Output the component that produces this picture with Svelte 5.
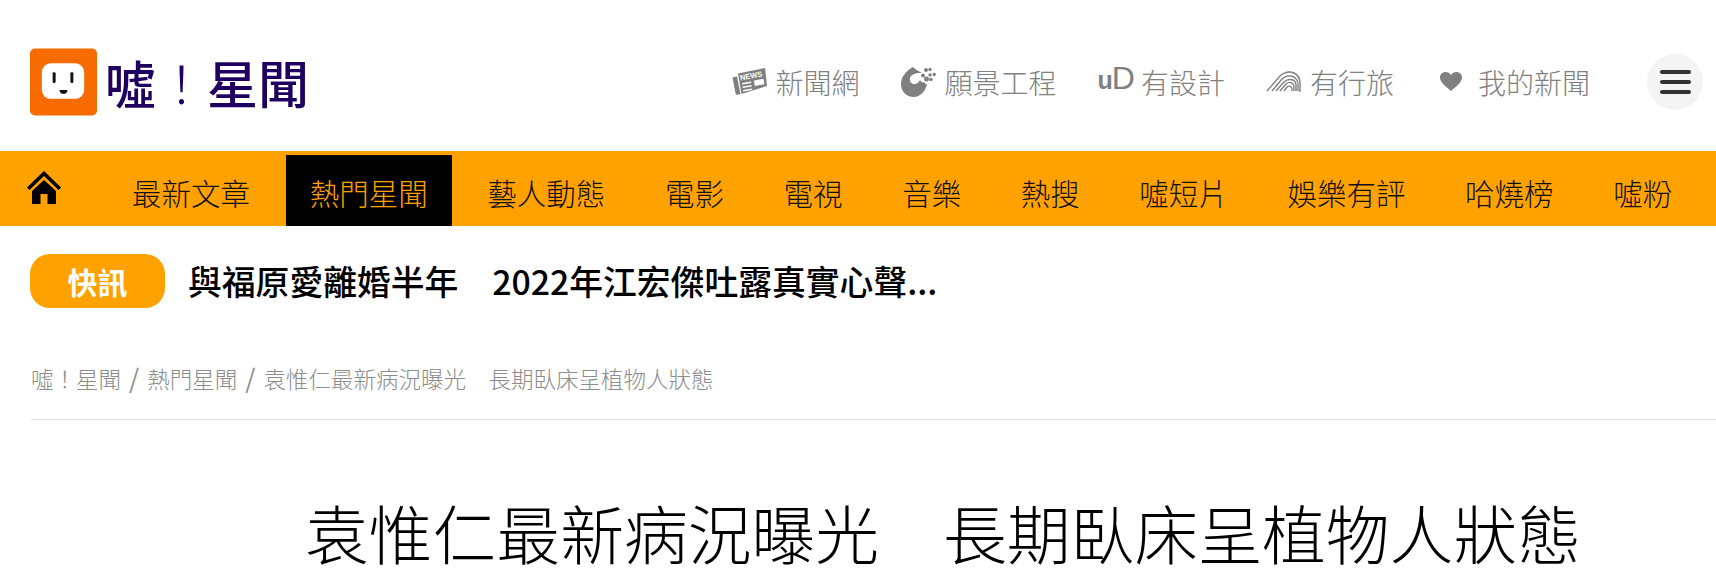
<script>
  const navItems = ['最新文章','熱門星聞','藝人動態','電影','電視','音樂','熱搜','噓短片','娛樂有評','哈燒榜','噓粉'];
</script>

<div class="page">
  <header class="top">
    <a class="brand" href="#top">
      <svg class="logo" viewBox="0 0 68 68" aria-hidden="true">
        <rect width="68" height="68" rx="5" fill="#f76b00"/>
        <rect x="12" y="15" width="43" height="36" rx="9" fill="#fff"/>
        <rect x="23" y="24" width="3" height="11" rx="1.2" fill="#111"/>
        <rect x="41" y="24" width="3" height="11" rx="1.2" fill="#111"/>
        <path d="M30 42h8c0 2.500-1.800 4-4 4s-4-1.500-4-4z" fill="#111"/>
      </svg>
      <span class="brand-name">噓<span class="bang">！</span>星聞</span>
    </a>
    <nav class="sites">
      <a class="site news" href="#top">
        <svg width="35" height="27" viewBox="0 0 35 27" aria-hidden="true">
          <path d="M0.500 9.500L5 8.500l3.500 17.500-3 .8c-1 .2-1.600-.4-1.900-1.400z" fill="#808080"/>
          <path d="M6 5.500L33 0l2 18L9.500 26z" fill="#808080"/>
          <text class="news-word" x="8.500" y="12.500" transform="rotate(-11 8.500 12.500)">NEWS</text>
          <path d="M10 15l9-1.500.3 1.500-9 1.500zM10.500 18.500l9-1.500.3 1.500-9 1.500zM11 22l9-1.500.3 1.500-9 1.500z" fill="#fff"/>
          <path d="M22 12.500l9.500-1.700.8 5.500-9.500 1.700z" fill="#fff"/>
        </svg>
        <span>新聞網</span>
      </a>
      <a class="site vision" href="#top">
        <svg width="35" height="30" viewBox="0 0 35 30" aria-hidden="true">
          <path d="M12 0c3 3 6 4 9 6-5-.5-11 1-12 5-.6 3 1 5.500 3.500 6C15 17.500 18 15.500 19 13c1 2 2.500 2.800 4.500 2.300.2 1.200 1 2 2.500 2C24.500 24.500 19 30 13 30 5 30 0 24 0 17 0 10 5 4 12 0z" fill="#808080"/>
          <circle cx="25" cy="3" r="2" fill="#808080"/>
          <circle cx="29" cy="2.500" r="1.700" fill="#808080"/>
          <circle cx="22" cy="8.500" r="2" fill="#808080"/>
          <circle cx="29" cy="8" r="1.700" fill="#808080"/>
          <circle cx="33.200" cy="7.500" r="1.700" fill="#808080"/>
          <circle cx="25.500" cy="12" r="2.500" fill="#808080"/>
          <circle cx="30" cy="12.500" r="1.800" fill="#808080"/>
        </svg>
        <span>願景工程</span>
      </a>
      <a class="site ud" href="#top">
        <span class="ud-mark"><b>u</b>D</span>
        <span>有設計</span>
      </a>
      <a class="site trip" href="#top">
        <svg width="35" height="21" viewBox="0 0 35 21" fill="none" stroke="#808080" stroke-width="1.400" aria-hidden="true">
          <path d="M1 20L14 5C18 1 24 0 28 2c4 2 6 6 6 10v8h-1"/>
          <path d="M6 20L16 8c3-3 8-4 12-2 3 2 4 5 4 8v6"/>
          <path d="M10 20l8-9c3-3 6-3 9-2 2 1 3 4 3 6v5"/>
          <path d="M14 20l6-7c2-2 4-2 6-1 1 1 2 3 2 4v4"/>
          <path d="M18 20l3-4c1-1 3-1 4 0 .7.600 1 1.500 1 2.500V20"/>
        </svg>
        <span>有行旅</span>
      </a>
      <a class="site fav" href="#top">
        <svg width="22" height="19" viewBox="0 0 22 19" aria-hidden="true">
          <path d="M11 19C7 15 0 11 0 5.500 0 2.300 2.400 0 5.500 0 8 0 10 1.300 11 3 12 1.300 14 0 16.500 0 19.600 0 22 2.300 22 5.500 22 11 15 15 11 19z" fill="#808080"/>
        </svg>
        <span>我的新聞</span>
      </a>
      <button class="burger" aria-label="選單"><i></i><i></i><i></i></button>
    </nav>
  </header>

  <nav class="main-nav">
    <a class="home" href="#top" aria-label="首頁">
      <svg width="34" height="33" viewBox="0 0 34 33" aria-hidden="true">
        <path d="M17 0L34 16.500l-2.500 2.500L17 5 2.500 19 0 16.500z" fill="#000"/>
        <path d="M17 9L29 20v13H20.500V23h-7v10H5V20z" fill="#000"/>
      </svg>
    </a>
    {#each navItems as item}
      <a class="nav-item" class:active={item === '熱門星聞'} href="#top">{item}</a>
    {/each}
  </nav>

  <section class="ticker">
    <span class="pill">快訊</span>
    <a class="headline" href="#top">與福原愛離婚半年　2022年江宏傑吐露真實心聲...</a>
  </section>

  <div class="crumbs">
    <a href="#top">噓！星聞</a><span class="sep">/</span><a href="#top">熱門星聞</a><span class="sep">/</span><a href="#top">袁惟仁最新病況曝光　長期臥床呈植物人狀態</a>
  </div>

  <h1>袁惟仁最新病況曝光　長期臥床呈植物人狀態</h1>
</div>

<style>
  :global(body) {
    margin: 0;
    background: #fff;
    overflow: hidden;
  }
  .page {
    width: 1716px;
    height: 580px;
    overflow: hidden;
    font-family: "Noto Sans CJK TC", "Noto Sans", sans-serif;
    font-weight: 300;
  }
  a { color: inherit; text-decoration: none; }

  .top {
    height: 151px;
    display: flex;
    align-items: center;
    justify-content: space-between;
    padding: 12px 13px 0 30px;
    box-sizing: border-box;
  }
  .brand { display: flex; align-items: center; gap: 8px; }
  .logo { width: 67px; height: 68px; display: block; }
  .brand-name {
    font-size: 51px;
    line-height: 68px;
    font-weight: 500;
    color: #1f0060;
  }
  .bang { font-weight: 300; }
  .sites { display: flex; align-items: center; color: #808080; }
  .site {
    display: flex;
    align-items: center;
    font-size: 28px;
    line-height: 40px;
    gap: 9px;
  }
  .news-word {
    font-family: "Liberation Sans", sans-serif;
    font-size: 7.500px;
    font-weight: 700;
    fill: #fff;
    stroke: none;
  }
  .news { margin-right: 41px; }
  .vision { margin-right: 41px; }
  .ud { margin-right: 41px; gap: 7px; }
  .trip { margin-right: 46px; }
  .fav { margin-right: 57px; gap: 16px; }
  .ud-mark {
    font-family: "Liberation Sans", sans-serif;
    font-size: 32px;
    line-height: 30px;
    margin-top: -6px;
    letter-spacing: -1px;
    font-weight: 400;
  }
  .ud-mark b { font-size: 25px; font-weight: 700; }
  .burger {
    width: 56px;
    height: 56px;
    border: 0;
    border-radius: 50%;
    background: #f4f4f4;
    display: flex;
    flex-direction: column;
    align-items: center;
    justify-content: center;
    gap: 6px;
    padding: 0;
  }
  .burger i {
    display: block;
    width: 31px;
    height: 4px;
    border-radius: 2px;
    background: #333;
  }

  .main-nav {
    height: 75px;
    box-sizing: border-box;
    padding: 4px 0 0 27px;
    background: #ffa200;
    display: flex;
    align-items: stretch;
    gap: 11.600px;
  }
  .home { display: flex; align-items: center; width: 34px; margin-right: 35.500px; padding-bottom: 7px; }
  .nav-item {
    padding: 4px 24px 0;
    font-size: 29.500px;
    line-height: 67px;
    color: #111;
    white-space: nowrap;
    font-weight: 300;
  }
  .nav-item.active { background: #000; color: #ffa200; }

  .ticker {
    display: flex;
    align-items: center;
    gap: 23px;
    padding: 28px 0 0 30px;
  }
  .pill {
    width: 135px;
    height: 54px;
    border-radius: 20px;
    background: #ffa200;
    color: #fff;
    font-size: 30px;
    font-weight: 700;
    line-height: 54px;
    text-align: center;
  }
  .headline {
    font-size: 33.800px;
    font-weight: 500;
    color: #000;
    line-height: 54px;
    white-space: nowrap;
  }

  .crumbs {
    margin: 53px 0 0 31px;
    padding-bottom: 25px;
    border-bottom: 1px solid #e2e2e2;
    font-size: 22.500px;
    line-height: 32px;
    font-weight: 300;
    color: #8c8c8c;
    white-space: nowrap;
  }
  .sep { margin: 0 8px; font-size: 26px; font-weight: 400; }

  h1 {
    margin: 71px 0 0 305px;
    font-size: 63.800px;
    line-height: 80px;
    font-weight: 300;
    color: #000;
    white-space: nowrap;
  }
</style>
